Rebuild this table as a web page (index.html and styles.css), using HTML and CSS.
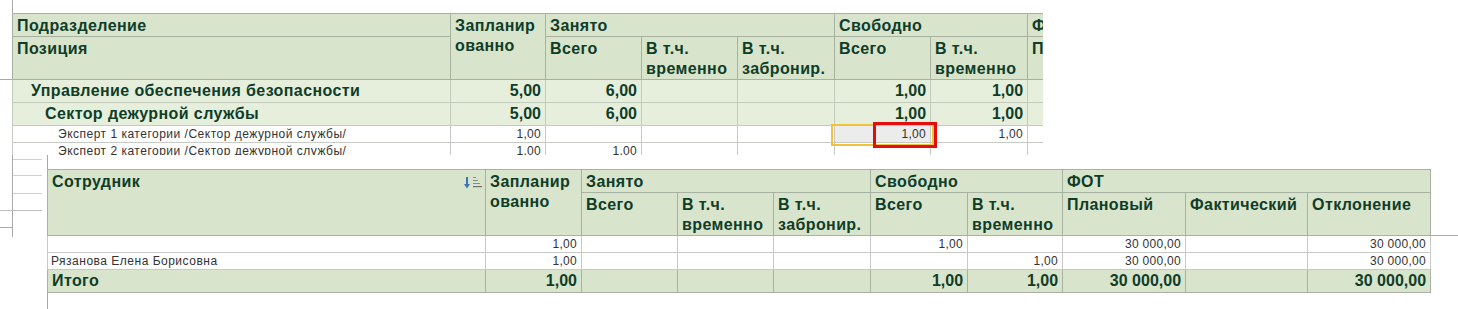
FILE: index.html
```html
<!DOCTYPE html>
<html lang="ru">
<head>
<meta charset="utf-8">
<title>Позиции</title>
<link rel="stylesheet" href="styles.css">
</head>
<body>
<div class="screen">
  <div class="ghost">
    <span class="gv"></span>
    <span class="gh g79"></span>
    <span class="gh gs g159"></span>
    <span class="gh gs g175"></span>
    <span class="gh gs g193"></span>
    <span class="gh gw g210"></span>
    <span class="gh g227"></span>
  </div>

  <div class="back">
    <div class="clip">
      <table class="grid top">
        <colgroup>
          <col class="c-name"><col class="c95"><col class="c96"><col class="c96"><col class="c97"><col class="c96"><col class="c97"><col class="c123"><col class="c122"><col class="c123">
        </colgroup>
        <thead>
          <tr class="hr1">
            <th>Подразделение</th>
            <th rowspan="2">Запланир<br>ованно</th>
            <th colspan="3">Занято</th>
            <th colspan="2">Свободно</th>
            <th colspan="3">ФОТ</th>
          </tr>
          <tr class="hr2">
            <th>Позиция</th>
            <th>Всего</th>
            <th>В т.ч.<br>временно</th>
            <th>В т.ч.<br>забронир.</th>
            <th>Всего</th>
            <th>В т.ч.<br>временно</th>
            <th>Плановый</th>
            <th>Фактический</th>
            <th>Отклонение</th>
          </tr>
        </thead>
        <tbody>
          <tr class="grp">
            <td class="lv1">Управление обеспечения безопасности</td>
            <td class="num">5,00</td><td class="num">6,00</td><td></td><td></td>
            <td class="num">1,00</td><td class="num">1,00</td><td></td><td></td><td></td>
          </tr>
          <tr class="grp">
            <td class="lv2">Сектор дежурной службы</td>
            <td class="num">5,00</td><td class="num">6,00</td><td></td><td></td>
            <td class="num">1,00</td><td class="num">1,00</td><td></td><td></td><td></td>
          </tr>
          <tr class="row">
            <td class="lv3">Эксперт 1 категории /Сектор дежурной службы/</td>
            <td class="num">1,00</td><td></td><td></td><td></td>
            <td class="num sel">1,00</td><td class="num">1,00</td><td></td><td></td><td></td>
          </tr>
          <tr class="row">
            <td class="lv3">Эксперт 2 категории /Сектор дежурной службы/</td>
            <td class="num">1,00</td><td class="num">1,00</td><td></td><td></td>
            <td></td><td></td><td></td><td></td><td></td>
          </tr>
        </tbody>
      </table>
    </div>
  </div>

  <div class="focus-yellow"></div>
  <div class="focus-red"></div>

  <div class="panel">
    <div class="pane">
      <div class="tablerow">
        <table class="grid low">
          <colgroup>
            <col class="c-name"><col class="c96"><col class="c96"><col class="c96"><col class="c97"><col class="c97"><col class="c95"><col class="c123"><col class="c122"><col class="c123">
          </colgroup>
          <thead>
            <tr class="hr1">
              <th rowspan="2" class="emp">
                <div class="emp-head">
                  <span>Сотрудник</span>
                  <svg class="sort" width="20" height="14" viewBox="0 0 20 14" aria-hidden="true">
                    <rect x="2" y="1" width="2" height="8" fill="#3b73b5"/>
                    <polygon points="0,8 6,8 3,12.5" fill="#3b73b5"/>
                    <rect x="9" y="1" width="3" height="1" fill="#8a8a8a"/>
                    <rect x="9" y="4" width="5" height="1" fill="#8a8a8a"/>
                    <rect x="9" y="7" width="7" height="1" fill="#8a8a8a"/>
                    <rect x="9" y="10" width="9" height="1.2" fill="#6f6f6f"/>
                  </svg>
                </div>
              </th>
              <th rowspan="2">Запланир<br>ованно</th>
              <th colspan="3">Занято</th>
              <th colspan="2">Свободно</th>
              <th colspan="3">ФОТ</th>
            </tr>
            <tr class="hr2">
              <th>Всего</th>
              <th>В т.ч.<br>временно</th>
              <th>В т.ч.<br>забронир.</th>
              <th>Всего</th>
              <th>В т.ч.<br>временно</th>
              <th>Плановый</th>
              <th>Фактический</th>
              <th>Отклонение</th>
            </tr>
          </thead>
          <tbody>
            <tr class="row">
              <td></td>
              <td class="num">1,00</td><td></td><td></td><td></td>
              <td class="num">1,00</td><td></td>
              <td class="num">30 000,00</td><td></td><td class="num">30 000,00</td>
            </tr>
            <tr class="row">
              <td class="emp-name">Рязанова Елена Борисовна</td>
              <td class="num">1,00</td><td></td><td></td><td></td>
              <td></td><td class="num">1,00</td>
              <td class="num">30 000,00</td><td></td><td class="num">30 000,00</td>
            </tr>
          </tbody>
          <tfoot>
            <tr class="tot">
              <td>Итого</td>
              <td class="num">1,00</td><td></td><td></td><td></td>
              <td class="num">1,00</td><td class="num">1,00</td>
              <td class="num">30 000,00</td><td></td><td class="num">30 000,00</td>
            </tr>
          </tfoot>
        </table>
        <div class="tail"></div>
      </div>
    </div>
  </div>
</div>
</body>
</html>
```
FILE: styles.css
```css
* { box-sizing: border-box; }
html, body { margin: 0; padding: 0; }
body {
  width: 1458px;
  height: 309px;
  overflow: hidden;
  background: #fff;
  font-family: "Liberation Sans", Arial, sans-serif;
}
.screen {
  position: relative;
  width: 1458px;
  height: 309px;
  overflow: hidden;
  background: #fff;
}

/* stray lines of the underlying form */
.ghost { position: absolute; inset: 0; }
.gv { position: absolute; left: 12px; top: 0; width: 1px; height: 237px; background: #a9a9a9; }
.gh { position: absolute; height: 1px; background: #b8b8b8; }
.g79 { top: 79px; left: 0; width: 12px; background: #a9a9a9; }
.gs { left: 13px; width: 29px; background: #cfcfcf; }
.g159 { top: 159px; }
.g175 { top: 175px; }
.g193 { top: 193px; }
.gw { left: 0; width: 42px; background: #bdbdbd; }
.g210 { top: 210px; }
.g227 { top: 227px; left: 0; width: 12px; background: #a9a9a9; }

.back { position: relative; padding: 13px 0 0 12px; }
.clip { width: 1031px; height: 142px; overflow: hidden; }

/* grid */
table.grid {
  border-collapse: collapse;
  table-layout: fixed;
}
.c-name { width: 438px; }
.c95 { width: 95px; }
.c96 { width: 96px; }
.c97 { width: 97px; }
.c122 { width: 122px; }
.c123 { width: 123px; }
.top { width: 1383px; }
.low { width: 1383px; }

.grid th, .grid td {
  border: 1px solid #c6c9c4;
  overflow: hidden;
  white-space: nowrap;
  vertical-align: top;
}
.grid thead th {
  background: #d8e4cc;
  border-color: #a8b2a2;
  color: #0f3d28;
  font-weight: bold;
  font-size: 16px;
  letter-spacing: 0.4px;
  line-height: 20px;
  text-align: left;
  padding: 2px 4px 0 4px;
}
.grid .hr1 { height: 23px; }
.grid .hr2 { height: 43px; }

.grp td {
  background: #e6eedc;
  border-color: #c3cbbd;
  color: #0f3d28;
  font-weight: bold;
  font-size: 16px;
  letter-spacing: 0.4px;
  line-height: 20px;
  height: 23px;
  padding: 1px 4px 0 4px;
}
.row td {
  background: #fff;
  color: #333;
  font-size: 12px;
  letter-spacing: 0.5px;
  line-height: 15px;
  height: 17px;
  padding: 1px 4px 0 4px;
}
.row td.num { letter-spacing: 0.3px; }
.grp td.num, .tot td.num { letter-spacing: 0; }
.num { text-align: right; }
.lv1 { padding-left: 18px !important; }
.lv2 { padding-left: 32px !important; }
.lv3 { padding-left: 45px !important; }
.sel { background: #ececec !important; }

.focus-yellow {
  position: absolute;
  left: 831px; top: 124px;
  width: 103px; height: 22px;
  border: 2px solid #f2c23c;
}
.focus-red {
  position: absolute;
  left: 873px; top: 122px;
  width: 64px; height: 26px;
  border: 3px solid #e30d0d;
}

/* lower overlay panel */
.panel {
  position: absolute;
  left: 42px; top: 155px;
  width: 1416px; height: 154px;
  background: #fff;
  padding-left: 5px;
}
.pane {
  height: 100%;
  border-left: 1px solid #a9a9a9;
  padding-top: 14px;
}
.tablerow { display: flex; align-items: flex-start; margin-left: -1px; }
.tail { flex: 1; height: 67px; border-bottom: 1px solid #a8b2a2; }

.emp-head { display: flex; justify-content: space-between; align-items: flex-start; }
.sort { margin-top: 4px; margin-right: -3px; flex: none; }
.emp-name { padding-left: 3px !important; }

.tot td {
  background: #d8e4cc;
  border-color: #a8b2a2;
  color: #0f3d28;
  font-weight: bold;
  font-size: 16px;
  letter-spacing: 0.4px;
  line-height: 20px;
  height: 23px;
  padding: 1px 4px 0 4px;
}
```
